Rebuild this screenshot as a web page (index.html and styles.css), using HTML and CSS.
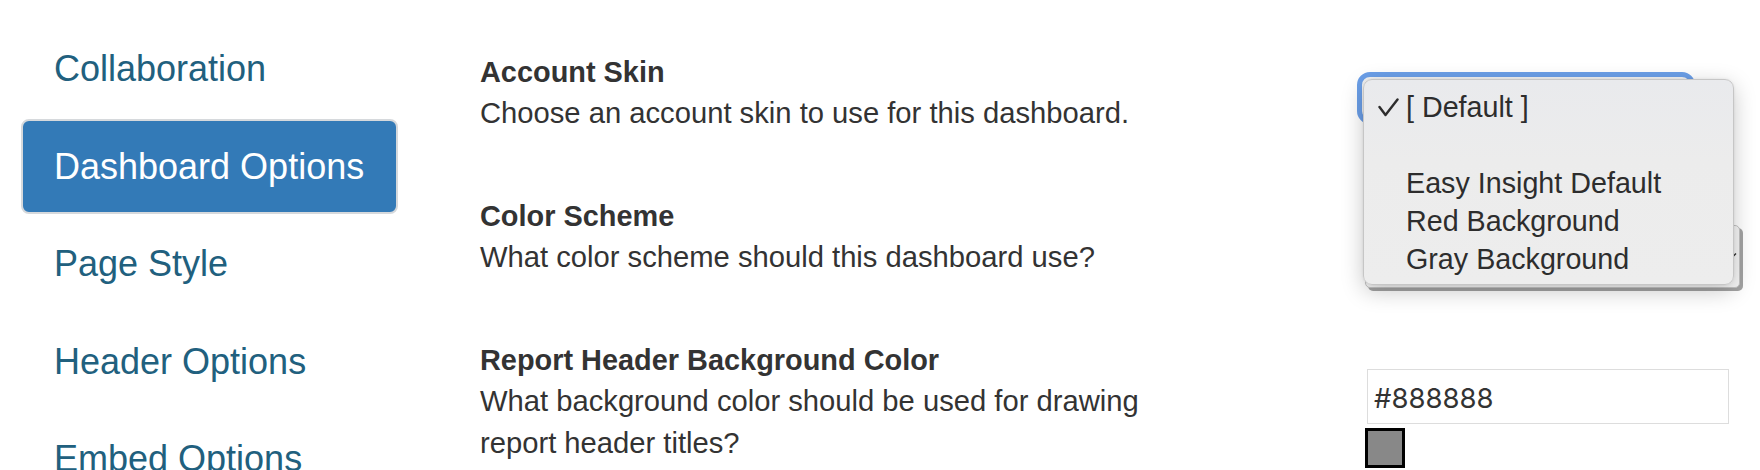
FILE: index.html
```html
<!DOCTYPE html>
<html lang="en">
<head>
<meta charset="utf-8">
<title>Dashboard Options</title>
<link rel="stylesheet" href="styles.css">
</head>
<body>
<div class="page">
  <nav class="sidenav">
    <a class="nav-item">Collaboration</a>
    <a class="nav-item active">Dashboard Options</a>
    <a class="nav-item">Page Style</a>
    <a class="nav-item">Header Options</a>
    <a class="nav-item">Embed Options</a>
  </nav>

  <main class="settings">
    <section class="row">
      <div class="desc">
        <div class="title">Account Skin</div>
        <div class="help">Choose an account skin to use for this dashboard.</div>
      </div>
      <div class="control">
        <div class="select select-focused"></div>
      </div>
    </section>

    <section class="row">
      <div class="desc">
        <div class="title">Color Scheme</div>
        <div class="help">What color scheme should this dashboard use?</div>
      </div>
      <div class="control">
        <div class="select select-plain">
          <svg class="select-arrow" width="8" height="6" viewBox="0 0 8 6"><path d="M1 1.5 L4 4.5 L7 1.5" fill="none" stroke="#333" stroke-width="1.4"/></svg>
        </div>
      </div>
    </section>

    <section class="row row-last">
      <div class="desc">
        <div class="title">Report Header Background Color</div>
        <div class="help help-narrow">What background color should be used for drawing report header titles?</div>
      </div>
      <div class="control">
        <div class="color-input">#888888</div>
        <div class="swatch"></div>
      </div>
    </section>
  </main>

  <div class="popup">
    <div class="popup-item checked">
      <svg class="check" width="21" height="19" viewBox="0 0 21 19"><polyline points="1.5,9 7.5,17 19.5,1.5" fill="none" stroke="#2d2d2d" stroke-width="2.4" stroke-linecap="round" stroke-linejoin="round"/></svg>
      <span>[ Default ]</span>
    </div>
    <div class="popup-item"><span>&nbsp;</span></div>
    <div class="popup-item"><span>Easy Insight Default</span></div>
    <div class="popup-item"><span>Red Background</span></div>
    <div class="popup-item"><span>Gray Background</span></div>
  </div>
</div>
</body>
</html>
```

FILE: styles.css
```css
html, body {
  margin: 0;
  padding: 0;
  background: #ffffff;
}

body {
  font-family: "Liberation Sans", Arial, sans-serif;
  color: #333333;
  overflow: hidden;
}

.page {
  position: relative;
  display: flex;
  align-items: flex-start;
  width: 1760px;
  height: 470px;
}

/* ---------- left navigation ---------- */
.sidenav {
  display: flex;
  flex-direction: column;
  gap: 2.5px;
  width: 377px;
  margin-left: 21px;
  padding-top: 21px;
  flex: none;
}

.nav-item {
  display: block;
  box-sizing: border-box;
  height: 95px;
  padding-left: 31px;
  border: 2px solid transparent;
  border-radius: 8px;
  font-size: 36px;
  line-height: 91px;
  color: #21607e;
  text-decoration: none;
  white-space: nowrap;
}

.nav-item.active {
  background: #337ab7;
  border-color: #d6d9dc;
  color: #ffffff;
}

/* ---------- settings ---------- */
.settings {
  flex: 1;
  padding-left: 82px;
  padding-top: 52px;
}

.row {
  display: grid;
  grid-template-columns: 877px 1fr;
  height: 82px;
  margin-bottom: 62px;
}

.row-last {
  height: auto;
  margin-bottom: 0;
}

.title {
  font-size: 28.9px;
  font-weight: bold;
  line-height: 41px;
  color: #333333;
  white-space: nowrap;
}

.help {
  font-size: 29.2px;
  line-height: 41px;
  color: #333333;
}

.help-narrow {
  max-width: 700px;
  line-height: 41.5px;
}

.control {
  display: flex;
  flex-direction: column;
  align-items: flex-start;
}

.select {
  box-sizing: border-box;
  position: relative;
}

.select-focused {
  margin-top: 20px;
  width: 338px;
  height: 52px;
  border: 5px solid #6b9fe8;
  border-radius: 13px;
  background: #f4f4f4;
}

.select-plain {
  margin-top: 29px;
  margin-left: 8px;
  width: 375px;
  height: 63px;
  border: 1px solid #c4c4c4;
  border-radius: 5px;
  background: #f7f7f7;
  box-shadow: 3px 3px 0 0 #a3a3a3;
}

.select-arrow {
  position: absolute;
  right: 2px;
  top: 26px;
}

.color-input {
  box-sizing: border-box;
  margin-top: 29px;
  margin-left: 10px;
  width: 362px;
  height: 55px;
  border: 1px solid #dddddd;
  padding-left: 6px;
  padding-top: 4px;
  font-family: Inter, "Liberation Sans", sans-serif;
  font-size: 27.5px;
  line-height: 49px;
  color: #333333;
  background: #ffffff;
}

.swatch {
  box-sizing: border-box;
  margin-top: 4px;
  margin-left: 8px;
  width: 40px;
  height: 40px;
  border: 3px solid #000000;
  background: #888888;
}

/* ---------- native select popup (overlay) ---------- */
.popup {
  position: absolute;
  left: 1363px;
  top: 79px;
  box-sizing: border-box;
  width: 371px;
  padding: 9px 0 6px;
  border: 1px solid #c6c6c6;
  border-radius: 9px;
  background: linear-gradient(#e9eaed, #ececec 40%, #ededed);
  box-shadow: 0 6px 22px rgba(0, 0, 0, 0.22), 0 0 3px rgba(0, 0, 0, 0.08);
}

.popup-item {
  position: relative;
  height: 37.9px;
  padding-left: 42px;
  font-size: 28.7px;
  line-height: 37.9px;
  color: #2d2d2d;
  white-space: nowrap;
}

.check {
  position: absolute;
  left: 14px;
  top: 9px;
}
```
